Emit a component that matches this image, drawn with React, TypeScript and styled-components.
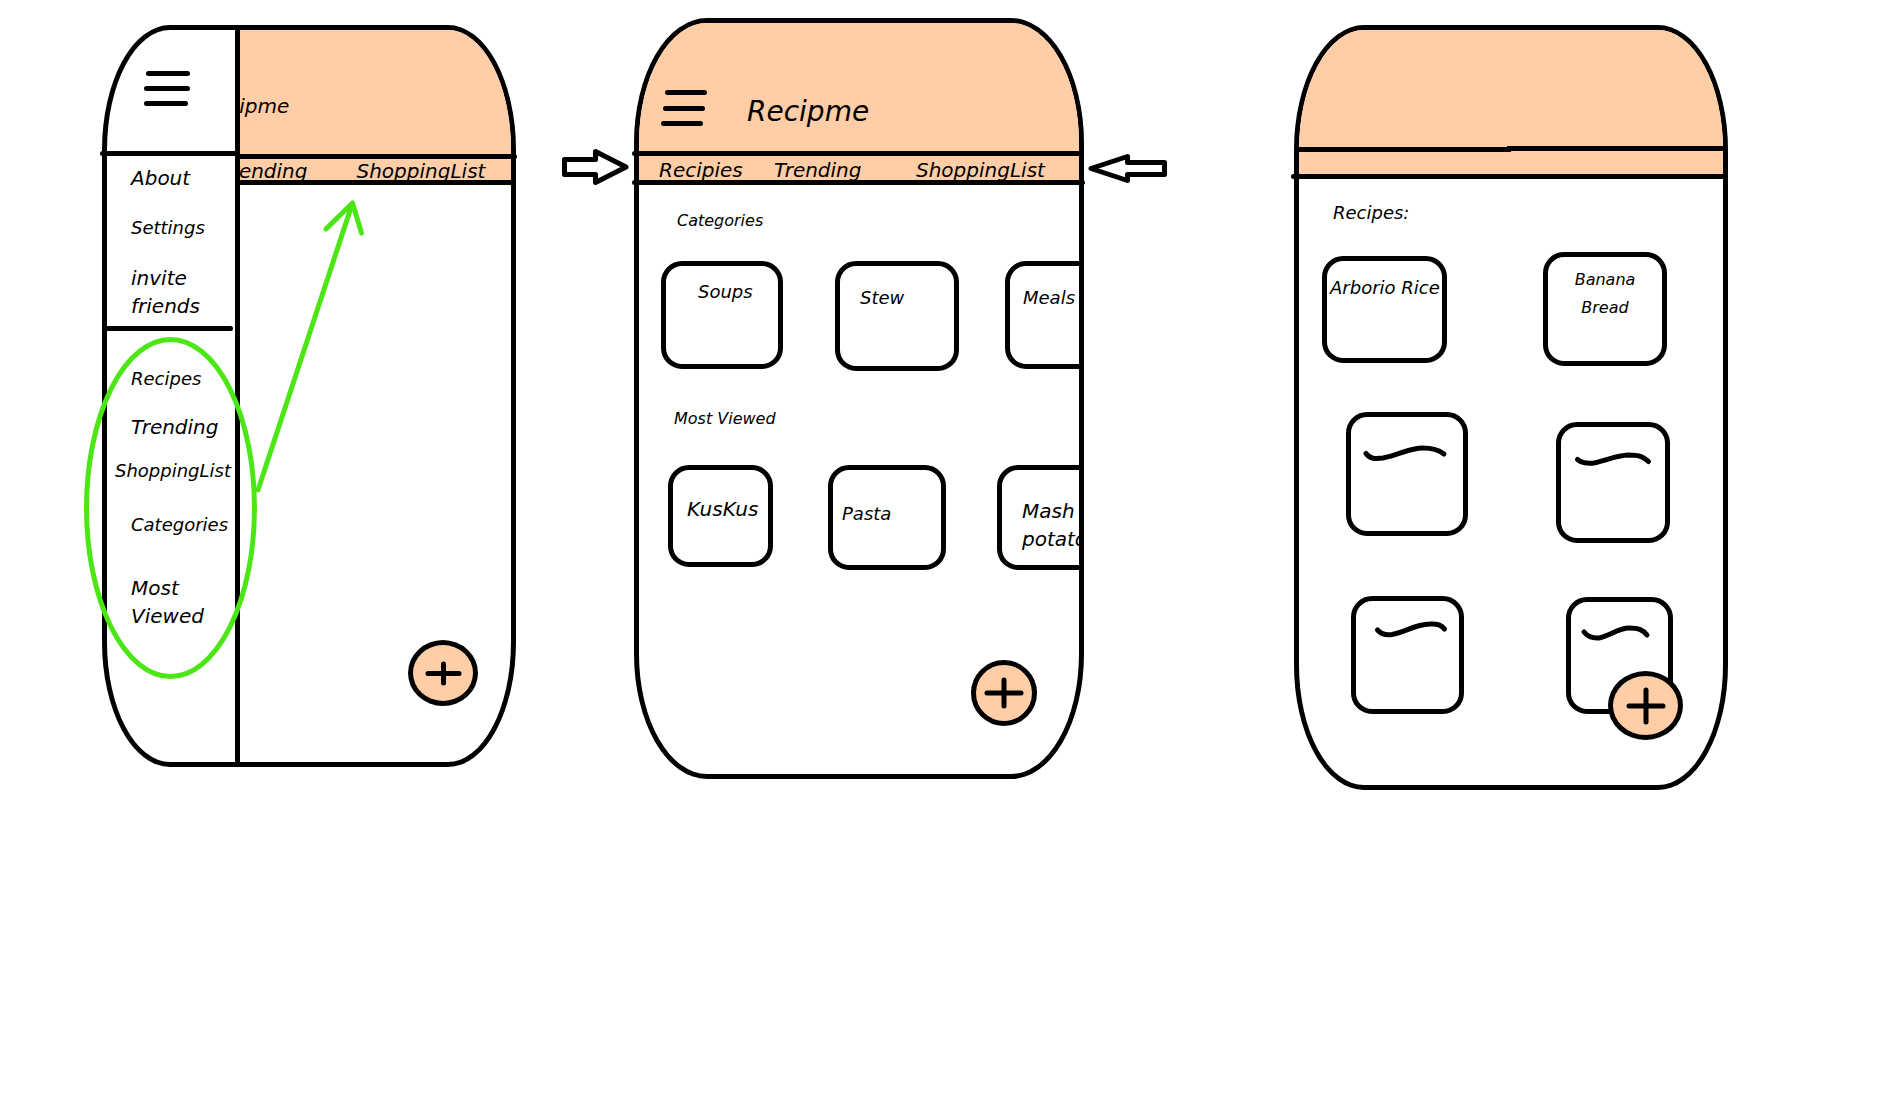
import React from "react";
import styled, { createGlobalStyle } from "styled-components";

const INK = "#000000";
const PEACH = "#ffcda6";
const MARKER = "#4ce614";

const GlobalStyle = createGlobalStyle`
  *, *::before, *::after { box-sizing: border-box; }
  body {
    margin: 0;
    background: #ffffff;
    color: ${INK};
    font-family: "Segoe Print", "DejaVu Sans", cursive;
    font-style: italic;
    font-size: 20px;
    line-height: 28px;
  }
`;

const Board = styled.main`
  display: grid;
  grid-template-columns: 414fr 118fr 450fr 210fr 434fr;
  align-items: start;
  padding: 18px 170px 48px 102px;
`;

const Phone = styled.section<{ $height: number; $corner: number; $drop?: number }>`
  --corner: ${(p) => p.$corner - 5}px;
  position: relative;
  display: flex;
  flex-direction: column;
  min-width: 0;
  min-height: ${(p) => p.$height}px;
  margin-top: ${(p) => p.$drop ?? 0}px;
  border: 5px solid ${INK};
  border-radius: ${(p) => p.$corner}px / 125px;
`;

const TopArea = styled.header<{ $rightOnly?: boolean }>`
  background: ${PEACH};
  border-radius: ${(p) => (p.$rightOnly ? "0" : "var(--corner)")} var(--corner) 0 0 / ${(p) => (p.$rightOnly ? "0" : "120px")} 120px 0 0;
`;

const Rule = styled.div<{ $left?: number; $right?: number }>`
  height: 5px;
  margin: 0 ${(p) => -(p.$right ?? 0)}px 0 ${(p) => -(p.$left ?? 0)}px;
  border-radius: ${(p) => (p.$left ? 3 : 0)}px ${(p) => (p.$right ? 3 : 0)}px ${(p) => (p.$right ? 3 : 0)}px ${(p) => (p.$left ? 3 : 0)}px;
  background: ${INK};
`;

/* A rule drawn in two strokes, the second one a touch higher. */
const BrokenRule = styled.div`
  height: 6px;
  background:
    linear-gradient(${INK}, ${INK}) left bottom / 50% 5px no-repeat,
    linear-gradient(${INK}, ${INK}) right top / 51% 5px no-repeat;
`;

const IconButton = styled.button`
  display: block;
  padding: 0;
  border: 0;
  background: none;
  cursor: pointer;
`;

const Drawing = styled.svg`
  display: block;
  overflow: visible;
  fill: none;
  stroke: ${INK};
  stroke-width: 5px;
  stroke-linecap: round;
  stroke-linejoin: round;
`;

const AddButton = styled.button<{ $w: number; $h: number; $right: number; $bottom: number }>`
  position: absolute;
  right: ${(p) => p.$right}px;
  bottom: ${(p) => p.$bottom}px;
  display: grid;
  place-items: center;
  width: ${(p) => p.$w}px;
  height: ${(p) => p.$h}px;
  padding: 0;
  border: 5px solid ${INK};
  border-radius: 50%;
  background: ${PEACH};
  cursor: pointer;
`;

const TextLink = styled.a<{ $small?: boolean }>`
  display: block;
  color: inherit;
  text-decoration: none;
  font-size: ${(p) => (p.$small ? 18 : 20)}px;
`;

/* First phone: drawer over the home screen */

const DrawerLayout = styled.div`
  display: grid;
  grid-template-columns: 133px minmax(0, 1fr);
  flex: 1;
`;

const Drawer = styled.aside`
  border-right: 5px solid ${INK};
`;

const DrawerHead = styled.div`
  height: 121px;
  padding: 41px 0 0 37px;
`;

const DrawerList = styled.ul<{ $top: number; $bottom: number }>`
  margin: 0;
  padding: ${(p) => p.$top}px 0 ${(p) => p.$bottom}px;
  list-style: none;
`;

const DrawerItem = styled.li<{ $before?: number; $wide?: boolean }>`
  margin-top: ${(p) => p.$before ?? 0}px;
  padding-left: ${(p) => (p.$wide ? 8 : 24)}px;
  white-space: nowrap;
`;

const Behind = styled.div`
  min-width: 0;
`;

const BehindTitle = styled.div`
  height: 124px;
  padding-top: 62px;
  overflow: hidden;
`;

const BehindName = styled.div`
  margin-left: -38px;
`;

const BehindTabs = styled.nav`
  display: flex;
  gap: 49px;
  height: 21px;
  overflow-x: clip;
  overflow-y: visible;
  line-height: 24px;
  white-space: nowrap;

  & > :first-child { margin-left: -20px; }
`;

const Marker = styled(Drawing)`
  position: absolute;
  left: -27px;
  top: 165px;
  stroke: ${MARKER};
  pointer-events: none;
`;

/* Second phone: home */

const HomeHead = styled.div`
  display: flex;
  align-items: flex-end;
  gap: 40px;
  height: 128px;
  padding: 0 22px 25px;
`;

const AppName = styled.h1`
  margin: 0;
  font-size: 28px;
  font-weight: 400;
  line-height: 28px;
`;

const HomeTabs = styled.nav`
  display: grid;
  grid-template-columns: 115fr 142fr 163fr;
  height: 24px;
  padding-left: 20px;
  line-height: 28px;
`;

const Heading = styled.h2<{ $top: number; $left: number; $size: number }>`
  margin: ${(p) => p.$top}px 0 0 ${(p) => p.$left}px;
  font-size: ${(p) => p.$size}px;
  font-weight: 400;
`;

const Shelf = styled.div<{ $top: number; $left: number; $columns: string }>`
  display: grid;
  grid-template-columns: ${(p) => p.$columns};
  align-items: start;
  margin-top: ${(p) => p.$top}px;
  padding-left: ${(p) => p.$left}px;
  overflow: hidden;
`;

const Card = styled.article<{ $w: number; $h: number; $top?: number; $left?: number; $size?: number; $centered?: boolean }>`
  flex: none;
  width: ${(p) => p.$w}px;
  height: ${(p) => p.$h}px;
  padding: ${(p) => p.$top ?? 0}px 0 0 ${(p) => p.$left ?? 0}px;
  border: 5px solid ${INK};
  border-radius: 21px;
  font-size: ${(p) => p.$size ?? 18}px;
  text-align: ${(p) => (p.$centered ? "center" : "left")};
  white-space: nowrap;
`;

const Pointer = styled.div<{ $top: number; $end?: boolean }>`
  display: flex;
  justify-content: ${(p) => (p.$end ? "flex-end" : "flex-start")};
  padding: ${(p) => p.$top}px 5px 0 4px;
`;

/* Third phone: recipe list */

const ListHead = styled.div`
  height: 116px;
`;

const ListTabs = styled.div`
  height: 22px;
`;

const Pair = styled.div<{ $top: number; $left: number; $gap: number; $stagger?: boolean }>`
  display: flex;
  align-items: center;
  gap: ${(p) => p.$gap}px;
  min-height: ${(p) => (p.$stagger ? 131 : 0)}px;
  margin-top: ${(p) => p.$top}px;
  padding-left: ${(p) => p.$left}px;

  & > :first-child { align-self: ${(p) => (p.$stagger ? "flex-start" : "center")}; }
  & > :last-child { align-self: ${(p) => (p.$stagger ? "flex-end" : "center")}; }
`;

function Plus({ w, h }: { w: number; h: number }) {
  return (
    <Drawing width={w} height={h} viewBox={`0 0 ${w} ${h}`} aria-hidden="true">
      <path d={`M3 ${h / 2}H${w - 3}M${w / 2} 3V${h - 3}`} />
    </Drawing>
  );
}

function Scribble({ w, h, d }: { w: number; h: number; d: string }) {
  return (
    <Drawing width={w} height={h} viewBox={`0 0 ${w} ${h}`} aria-hidden="true">
      <path d={d} />
    </Drawing>
  );
}

function DrawerPhone() {
  return (
    <Phone $height={742} $corner={68} $drop={7}>
      <DrawerLayout>
        <Drawer>
          <DrawerHead>
            <IconButton aria-label="Close menu">
              <Drawing width="46" height="35" viewBox="0 0 46 35">
                <path d="M4.500 2.500H43.500M2.500 17.500H43.500M2.500 32.500H41.500" />
              </Drawing>
            </IconButton>
          </DrawerHead>
          <Rule $left={7} />
          <DrawerList $top={8} $bottom={6}>
            <DrawerItem><TextLink href="#about">About</TextLink></DrawerItem>
            <DrawerItem $before={22}><TextLink href="#settings" $small>Settings</TextLink></DrawerItem>
            <DrawerItem $before={22}><TextLink href="#invite">invite<br />friends</TextLink></DrawerItem>
          </DrawerList>
          <Rule $right={-2} />
          <DrawerList $top={34} $bottom={0}>
            <DrawerItem><TextLink href="#recipes" $small>Recipes</TextLink></DrawerItem>
            <DrawerItem $before={20}><TextLink href="#trending">Trending</TextLink></DrawerItem>
            <DrawerItem $before={16} $wide><TextLink href="#shopping" $small>ShoppingList</TextLink></DrawerItem>
            <DrawerItem $before={26}><TextLink href="#categories" $small>Categories</TextLink></DrawerItem>
            <DrawerItem $before={35}><TextLink href="#viewed">Most<br />Viewed</TextLink></DrawerItem>
          </DrawerList>
        </Drawer>
        <Behind>
          <TopArea $rightOnly>
            <BehindTitle><BehindName>Recipme</BehindName></BehindTitle>
            <Rule $right={6} />
            <BehindTabs>
              <TextLink href="#trending">Trending</TextLink>
              <TextLink href="#shopping">ShoppingList</TextLink>
            </BehindTabs>
          </TopArea>
          <Rule />
        </Behind>
      </DrawerLayout>
      <AddButton $w={70} $h={66} $right={33} $bottom={56} aria-label="Add recipe">
        <Plus w={37} h={25} />
      </AddButton>
      <Marker width="290" height="490" viewBox="0 0 290 490" aria-hidden="true">
        <ellipse cx="90.5" cy="313" rx="84" ry="168.5" />
        <path d="M178 295L272.500 8M246 34L272.500 8L281.500 38" />
      </Marker>
    </Phone>
  );
}

function HomePhone() {
  return (
    <Phone $height={761} $corner={73}>
      <TopArea>
        <HomeHead>
          <IconButton aria-label="Open menu">
            <Drawing width="46" height="36" viewBox="0 0 46 36">
              <path d="M6.500 2.500H43.500M4.500 18.500H41.500M2.500 33.500H39.500" />
            </Drawing>
          </IconButton>
          <AppName>Recipme</AppName>
        </HomeHead>
        <Rule $left={7} />
        <HomeTabs>
          <TextLink href="#recipes">Recipies</TextLink>
          <TextLink href="#trending">Trending</TextLink>
          <TextLink href="#shopping">ShoppingList</TextLink>
        </HomeTabs>
      </TopArea>
      <Rule $left={7} $right={6} />
      <Heading $top={22} $left={38} $size={16}>Categories</Heading>
      <Shelf $top={26} $left={22} $columns="174px 170px 122px">
        <Card $w={122} $h={108} $top={12} $left={32}>Soups</Card>
        <Card $w={124} $h={110} $top={18} $left={20}>Stew</Card>
        <Card $w={122} $h={108} $top={18} $left={13}>Meals</Card>
      </Shelf>
      <Heading $top={34} $left={35} $size={16}>Most Viewed</Heading>
      <Shelf $top={32} $left={29} $columns="160px 169px 118px">
        <Card $w={105} $h={102} $top={25} $left={14} $size={20}>KusKus</Card>
        <Card $w={118} $h={105} $top={30} $left={9}>Pasta</Card>
        <Card $w={118} $h={105} $top={27} $left={20} $size={20}>Mash<br />potato</Card>
      </Shelf>
      <AddButton $w={66} $h={66} $right={42} $bottom={48} aria-label="Add recipe">
        <Plus w={40} h={32} />
      </AddButton>
    </Phone>
  );
}

function ListPhone() {
  return (
    <Phone $height={765} $corner={70} $drop={7}>
      <TopArea>
        <ListHead />
        <BrokenRule />
        <ListTabs />
      </TopArea>
      <Rule $left={8} />
      <Heading $top={20} $left={34} $size={18}>Recipes:</Heading>
      <Pair $top={25} $left={23} $gap={96}>
        <Card $w={125} $h={107} $top={13} $left={3}>Arborio Rice</Card>
        <Card $w={124} $h={114} $top={9} $size={16} $centered>Banana<br />Bread</Card>
      </Pair>
      <Pair $top={46} $left={47} $gap={88} $stagger>
        <Card $w={122} $h={124} $top={28} $left={12}>
          <Scribble w={84} h={18} d="M3 8.500C7 14 12 14 20 13C36 10 46 3 60 3C70 3 76 5 81 9" />
        </Card>
        <Card $w={114} $h={121} $top={25} $left={13}>
          <Scribble w={78} h={16} d="M3.500 7.500C8 11 12 12 20 11C34 8 42 3.500 54 3C66 3 70 5 74.500 9.500" />
        </Card>
      </Pair>
      <Pair $top={53} $left={52} $gap={102}>
        <Card $w={113} $h={118} $top={19} $left={18}>
          <Scribble w={74} h={18} d="M3.500 10C7 14 11 15.500 18 14.500C32 12 40 4.500 56 4C64 3.500 67 5 70.500 9" />
        </Card>
        <Card $w={107} $h={117} $top={23} $left={10}>
          <Scribble w={70} h={16} d="M3 7C7 12 11 13.500 18 13C28 11 38 3 48 3C58 3 62 5 66 10" />
        </Card>
      </Pair>
      <AddButton $w={75} $h={69} $right={40} $bottom={45} aria-label="Add recipe">
        <Plus w={40} h={38} />
      </AddButton>
    </Phone>
  );
}

export default function App() {
  return (
    <>
      <GlobalStyle />
      <Board>
        <DrawerPhone />
        <Pointer $top={131} $end>
          <Drawing width="67" height="36" viewBox="0 0 67 36" aria-hidden="true">
            <path d="M2.500 10.500H33.500V2.500L64 18L33.500 33.500V25.500H2.500Z" />
          </Drawing>
        </Pointer>
        <HomePhone />
        <Pointer $top={136}>
          <Drawing width="79" height="29" viewBox="0 0 79 29" aria-hidden="true">
            <path d="M76.500 8.500H39.500V2.500L3 14.500L39.500 26.500V20.500H76.500Z" />
          </Drawing>
        </Pointer>
        <ListPhone />
      </Board>
    </>
  );
}
